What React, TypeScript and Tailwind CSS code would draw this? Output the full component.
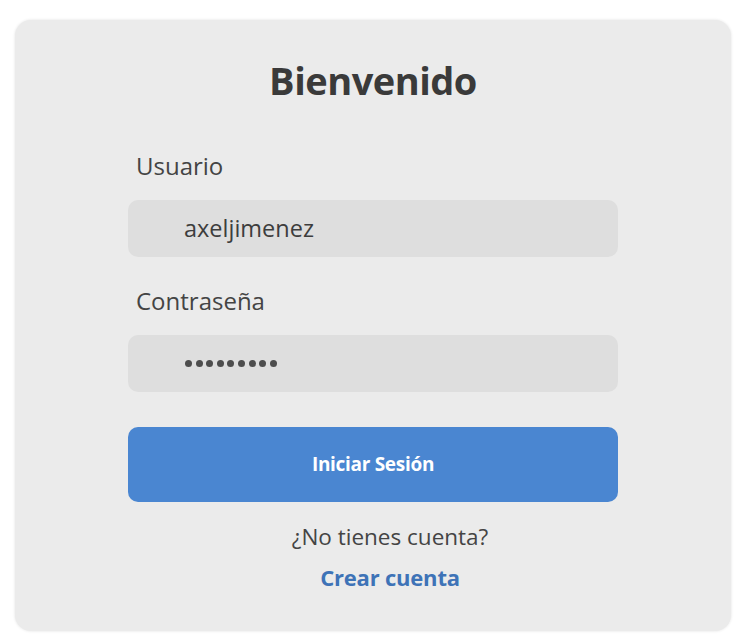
export default function App() {
  return (
    <div
      className="min-h-[644px] w-[744px] bg-white pt-[20px] pl-[15px]"
      style={{ fontFamily: '"Open Sans", "Noto Sans", sans-serif' }}
    >
      <div className="flex h-[611px] w-[716px] flex-col rounded-[16px] bg-[#ebebeb] px-[113px] pt-[36px] shadow-[0_0_3px_rgba(0,0,0,0.12)]">
        <h1 className="text-center text-[38px] font-bold leading-[48px] tracking-[-0.5px] text-[#3a3a3a]">
          Bienvenido
        </h1>

        <label className="mt-[47px] pl-[8px] text-[24px] leading-[30px] text-[#444]">
          Usuario
        </label>
        <div className="mt-[19px] flex h-[57px] items-center rounded-[10px] bg-[#dedede] pl-[56px] text-[23.5px] text-[#3d3d3d]">
          axeljimenez
        </div>

        <label className="mt-[29px] pl-[8px] text-[24px] leading-[30px] text-[#444]">
          Contraseña
        </label>
        <div className="mt-[19px] flex h-[57px] items-center gap-[3.6px] rounded-[10px] bg-[#dedede] pl-[57px]">
          {Array.from({ length: 9 }).map((_, i) => (
            <span key={i} className="h-[7px] w-[7px] rounded-full bg-[#4d4d4d]" />
          ))}
        </div>

        <button className="mt-[35px] flex h-[75px] items-center justify-center rounded-[10px] bg-[#4a86d1] text-[19px] font-bold tracking-[-0.3px] text-white">
          Iniciar Sesión
        </button>

        {/* en la captura estos dos textos quedan un poco corridos a la derecha */}
        <p className="mt-[20px] pl-[34px] text-center text-[22.5px] leading-[30px] text-[#444]">
          ¿No tienes cuenta?
        </p>
        <a className="mt-[10px] pl-[34px] text-center text-[22px] font-bold leading-[30px] tracking-[-0.2px] text-[#3e73b7]">
          Crear cuenta
        </a>
      </div>
    </div>
  );
}
